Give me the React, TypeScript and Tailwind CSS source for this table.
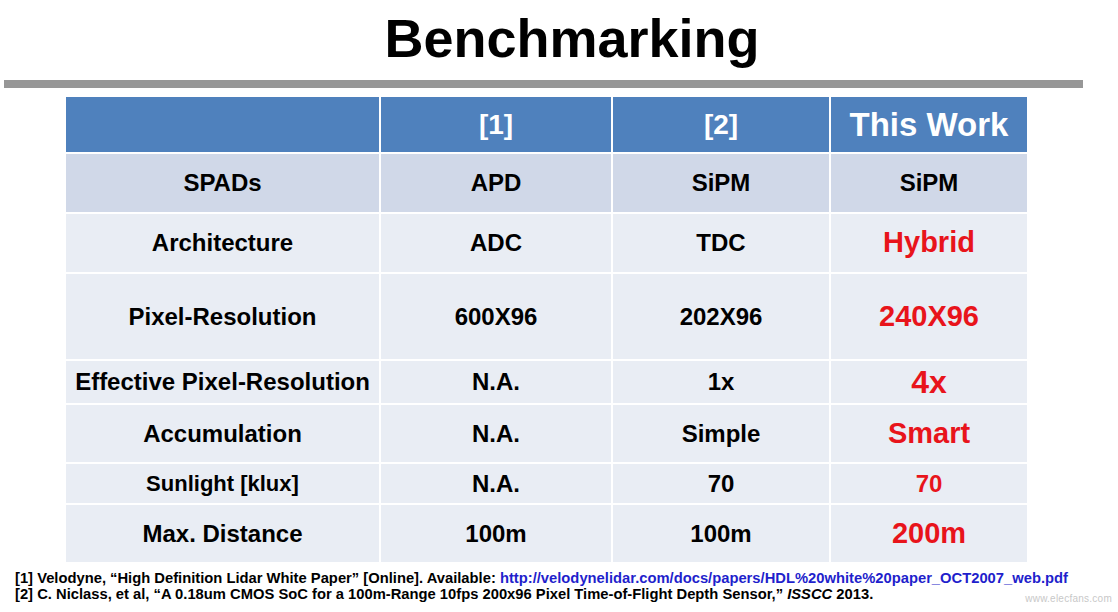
const rows = [
  { label: 'SPADs', a: 'APD', b: 'SiPM', c: 'SiPM', h: 'h-[58px]', bg: 'bg-[#d0d8e8]', lSize: 'text-[24px]', cRed: false, cSize: 'text-[24px]' },
  { label: 'Architecture', a: 'ADC', b: 'TDC', c: 'Hybrid', h: 'h-[58px]', bg: 'bg-[#e9edf4]', lSize: 'text-[24px]', cRed: true, cSize: 'text-[29px]' },
  { label: 'Pixel-Resolution', a: '600X96', b: '202X96', c: '240X96', h: 'h-[85px]', bg: 'bg-[#e9edf4]', lSize: 'text-[24px]', cRed: true, cSize: 'text-[29px]' },
  { label: 'Effective Pixel-Resolution', a: 'N.A.', b: '1x', c: '4x', h: 'h-[42px]', bg: 'bg-[#e9edf4]', lSize: 'text-[24px]', cRed: true, cSize: 'text-[32px]' },
  { label: 'Accumulation', a: 'N.A.', b: 'Simple', c: 'Smart', h: 'h-[57px]', bg: 'bg-[#e9edf4]', lSize: 'text-[24px]', cRed: true, cSize: 'text-[29px]' },
  { label: 'Sunlight [klux]', a: 'N.A.', b: '70', c: '70', h: 'h-[39px]', bg: 'bg-[#e9edf4]', lSize: 'text-[22px]', cRed: true, cSize: 'text-[24px]' },
  { label: 'Max. Distance', a: '100m', b: '100m', c: '200m', h: 'h-[57px]', bg: 'bg-[#e9edf4]', lSize: 'text-[24px]', cRed: true, cSize: 'text-[29px]' },
];

export default function App() {
  return (
    <div className="relative w-[1118px] h-[612px] overflow-hidden bg-white font-['Liberation_Sans',Arial,sans-serif] font-bold text-black">
      {/* Title */}
      <div className="flex justify-center pl-[26px] pt-[11px]">
        <h1 className="text-[54px] leading-none font-bold">Benchmarking</h1>
      </div>

      {/* Divider */}
      <div className="ml-[4px] mt-[15px] h-[8px] w-[1079px] bg-[#979797]" />

      {/* Table */}
      <div className="ml-[66px] mt-[9px] w-[961px] grid grid-cols-[313px_230px_216px_196px] gap-[2px] bg-white">
        <div className="h-[55px] bg-[#4f81bd]" />
        <div className="h-[55px] bg-[#4f81bd] flex items-center justify-center text-white text-[28px]">[1]</div>
        <div className="h-[55px] bg-[#4f81bd] flex items-center justify-center text-white text-[28px]">[2]</div>
        <div className="h-[55px] bg-[#4f81bd] flex items-center justify-center text-white text-[33px]">This Work</div>

        {rows.map((r) => (
          <div key={r.label} className="contents">
            <div className={`${r.h} ${r.bg} flex items-center justify-center ${r.lSize} whitespace-nowrap`}>{r.label}</div>
            <div className={`${r.h} ${r.bg} flex items-center justify-center text-[24px]`}>{r.a}</div>
            <div className={`${r.h} ${r.bg} flex items-center justify-center text-[24px]`}>{r.b}</div>
            <div
              className={`${r.h} ${r.bg} flex items-center justify-center ${r.cSize} ${r.cRed ? 'text-[#e8141b]' : 'text-black'}`}
            >
              {r.c}
            </div>
          </div>
        ))}
      </div>

      {/* Footnotes */}
      <div className="ml-[15px] mt-[8px] text-[14.75px] leading-[16px] whitespace-nowrap">
        <p>
          [1] Velodyne, “High Definition Lidar White Paper” [Online]. Available:{' '}
          <span className="text-[#1f1fcc]">http://velodynelidar.com/docs/papers/HDL%20white%20paper_OCT2007_web.pdf</span>
        </p>
        <p>
          [2] C. Niclass, et al, “A 0.18um CMOS SoC for a 100m-Range 10fps 200x96 Pixel Time-of-Flight Depth Sensor,”{' '}
          <span className="italic">ISSCC</span> 2013.
        </p>
      </div>

      {/* Watermark */}
      <div className="absolute right-[6px] bottom-[6px] text-[10px] font-normal text-[#c8c8c8] tracking-wide">
        www.elecfans.com
      </div>
    </div>
  );
}
